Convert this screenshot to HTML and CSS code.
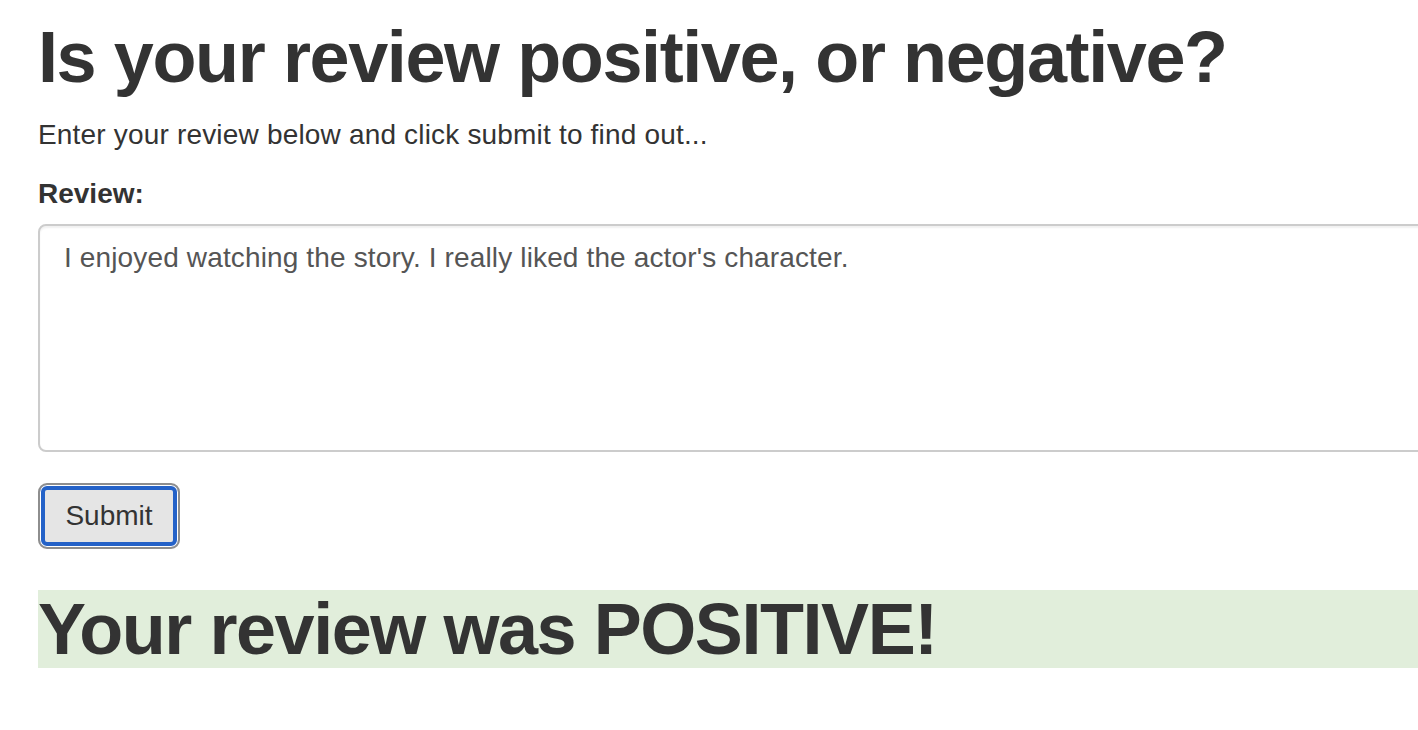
FILE: index.html
```html
<!DOCTYPE html>
<html lang="en">
<head>
<meta charset="utf-8">
<title>Sentiment</title>
<link rel="stylesheet" href="styles.css">
</head>
<body>
<div class="page">
  <h1 class="title">Is your review positive, or negative?</h1>
  <p class="lead">Enter your review below and click submit to find out...</p>
  <form class="form">
    <label class="label" for="review">Review:</label>
    <textarea class="review" id="review">I enjoyed watching the story. I really liked the actor's character.</textarea>
    <div class="actions">
      <button class="submit" type="button">Submit</button>
    </div>
  </form>
  <h1 class="result">Your review was POSITIVE!</h1>
</div>
</body>
</html>
```
FILE: styles.css
```css
html, body {
  margin: 0;
  padding: 0;
  overflow: hidden;
  background: #fff;
}
body {
  font-family: "Liberation Sans", Arial, sans-serif;
  color: #333;
  font-size: 28px;
  line-height: 40px;
  letter-spacing: 0.18px;
}
.page {
  width: 1500px;
  padding-left: 38px;
  padding-top: 18px;
}
.title {
  font-size: 72px;
  font-weight: 700;
  line-height: 79px;
  letter-spacing: -1.4px;
  margin: 0;
}
.lead {
  margin: 18px 0 0;
}
.form {
  display: flex;
  flex-direction: column;
  margin-top: 19px;
}
.label {
  font-weight: 700;
  margin-bottom: 10px;
  letter-spacing: 0;
}
.review {
  box-sizing: border-box;
  width: 100%;
  height: 228px;
  border: 2px solid #ccc;
  border-radius: 8px;
  padding: 12px 24px;
  font-family: "Liberation Sans", Arial, sans-serif;
  font-size: 28px;
  line-height: 40px;
  letter-spacing: 0.14px;
  color: #555;
  resize: none;
  box-shadow: inset 0 2px 2px rgba(0,0,0,0.06);
  outline: none;
}
.actions {
  margin-top: 31px;
}
.submit {
  box-sizing: border-box;
  width: 142px;
  height: 66px;
  border: 2px solid #8e8e8e;
  border-radius: 9px;
  background: #e5e5e5;
  box-shadow: inset 0 0 0 1px #fff, inset 0 0 0 5px #2462c8;
  font-family: "Liberation Sans", Arial, sans-serif;
  font-size: 28px;
  color: #333;
  padding: 0;
}
.result {
  margin: 41px 0 0;
  font-size: 72px;
  font-weight: 700;
  line-height: 78px;
  letter-spacing: -1.45px;
  background: #e1eedb;
}
```
